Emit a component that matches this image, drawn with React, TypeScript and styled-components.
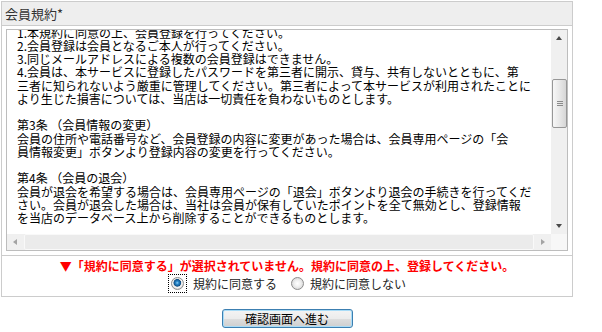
import React, { useLayoutEffect, useRef } from "react";
import styled, { createGlobalStyle } from "styled-components";

const GlobalStyle = createGlobalStyle`
  body {
    margin: 0;
    background: #fff;
    color: #000;
    font-family: "Noto Sans CJK JP", "Noto Sans", sans-serif;
  }
`;

const terms = [
  "会員規約",
  "",
  "当サイトのご利用にあたっては、以下の会員規約をよくお読みください。",
  "",
  "第1条 （会員）",
  "「会員」とは、本規約に同意の上、当店所定の手続きにより会員登録を行い、",
  "当店がこれを承認した方をいいます。",
  "",
  "第2条 （会員登録）",
  "会員登録にあたっては、以下の事項を遵守してください。",
  "1.本規約に同意の上、会員登録を行ってください。",
  "2.会員登録は会員となるご本人が行ってください。",
  "3.同じメールアドレスによる複数の会員登録はできません。",
  "4.会員は、本サービスに登録したパスワードを第三者に開示、貸与、共有しないとともに、第",
  "三者に知られないよう厳重に管理してください。第三者によって本サービスが利用されたことに",
  "より生じた損害については、当店は一切責任を負わないものとします。",
  "",
  "第3条 （会員情報の変更）",
  "会員の住所や電話番号など、会員登録の内容に変更があった場合は、会員専用ページの「会",
  "員情報変更」ボタンより登録内容の変更を行ってください。",
  "",
  "第4条 （会員の退会）",
  "会員が退会を希望する場合は、会員専用ページの「退会」ボタンより退会の手続きを行ってくだ",
  "さい。会員が退会した場合は、当社は会員が保有していたポイントを全て無効とし、登録情報",
  "を当店のデータベース上から削除することができるものとします。",
  "",
  "第5条 （会員資格の喪失）",
  "会員が以下のいずれかに該当する場合、当店は事前の通知なく会員資格を取り消すことが",
  "できるものとします。",
  "1.会員登録の申請内容に虚偽の記載があった場合",
  "2.本規約に違反した場合",
  "3.その他、当店が会員として不適切と判断した場合",
  "",
  "第6条 （ポイント）",
  "ポイントの付与および利用については、当店が別途定める条件に従うものとします。",
  "",
  "第7条 （個人情報の取り扱い）",
  "当店は、会員の個人情報を当店のプライバシーポリシーに従い適切に取り扱います。",
  "",
  "第8条 （禁止事項）",
  "会員は、本サービスの利用にあたり、以下の行為を行ってはならないものとします。",
  "1.他の会員または第三者の権利を侵害する行為",
  "2.当店の運営を妨害する行為",
  "3.法令または公序良俗に反する行為",
  "",
  "第9条 （規約の変更）",
  "当店は、会員の承諾を得ることなく本規約を変更できるものとします。",
  "",
  "第10条 （準拠法）",
  "本規約の解釈にあたっては、日本法を準拠法とします。",
  "",
  "附則",
  "本規約は、会員登録の時点より適用されます。",
].join("\n");

const App = () => {
  const termsRef = useRef<HTMLTextAreaElement | null>(null);

  useLayoutEffect(() => {
    if (termsRef.current) {
      termsRef.current.scrollTop = 137;
    }
  }, []);

  return (
    <Page>
      <GlobalStyle />
      <Table>
        <HeaderRow>会員規約*</HeaderRow>
        <TermsRow>
          <TermsBox>
            <TermsText ref={termsRef} readOnly wrap="off" value={terms} />
            <VScroll>
              <ArrowButton>
                <Arrow $dir="up" />
              </ArrowButton>
              <VTrack>
                <VThumb $top={33} $size={49}>
                  <Grip />
                </VThumb>
              </VTrack>
              <ArrowButton>
                <Arrow $dir="down" />
              </ArrowButton>
            </VScroll>
            <HScroll>
              <ArrowButton>
                <Arrow $dir="left" $muted />
              </ArrowButton>
              <HTrack>
                <HThumb />
              </HTrack>
              <ArrowButton>
                <Arrow $dir="right" $muted />
              </ArrowButton>
            </HScroll>
            <Corner />
          </TermsBox>
        </TermsRow>
        <AgreeRow>
          <Warning>
            ▼「規約に同意する」が選択されていません。規約に同意の上、登録してください。
          </Warning>
          <RadioRow>
            <RadioOption>
              <FocusRing>
                <Radio type="radio" name="agree" defaultChecked />
              </FocusRing>
              規約に同意する
            </RadioOption>
            <RadioOption>
              <Radio type="radio" name="agree" />
              規約に同意しない
            </RadioOption>
          </RadioRow>
        </AgreeRow>
      </Table>
      <Actions>
        <SubmitButton type="button">確認画面へ進む</SubmitButton>
      </Actions>
    </Page>
  );
};

export default App;

const Page = styled.div`
  padding: 1px 0 0 1px;
  width: 572px;
`;

const Table = styled.div`
  width: 572px;
  box-sizing: border-box;
  border: 1px solid #cccccc;
`;

const HeaderRow = styled.div`
  height: 23px;
  line-height: 23px;
  padding-left: 3px;
  background: #eeeeee;
  border-bottom: 1px solid #cccccc;
  font-size: 13px;
  color: #333333;
`;

const TermsRow = styled.div`
  padding: 3px 4px 4px;
  border-bottom: 1px solid #cccccc;
`;

const TermsBox = styled.div`
  display: grid;
  grid-template-columns: 1fr 16px;
  grid-template-rows: 1fr 16px;
  width: 562px;
  height: 222px;
  box-sizing: border-box;
  border: 1px solid #bdbdbd;
  background: #fff;
`;

const TermsText = styled.textarea`
  display: block;
  width: 100%;
  height: 100%;
  min-height: 0;
  box-sizing: border-box;
  margin: 0;
  padding: 0 0 0 10px;
  border: none;
  outline: none;
  resize: none;
  overflow: hidden;
  white-space: pre;
  background: #fff;
  color: #000;
  font-family: "Noto Sans CJK JP", sans-serif;
  font-size: 12px;
  line-height: 13.25px;
`;

const VScroll = styled.div`
  display: flex;
  flex-direction: column;
  background: #f0f0f0;
`;

const HScroll = styled.div`
  display: flex;
  background: #f0f0f0;
`;

const Corner = styled.div`
  background: #f7f7f7;
`;

const ArrowButton = styled.div`
  flex: 0 0 16px;
  height: 16px;
  display: flex;
  align-items: center;
  justify-content: center;
`;

const Arrow = styled.span<{ $dir: "up" | "down" | "left" | "right"; $muted?: boolean }>`
  width: 0;
  height: 0;
  border-style: solid;
  border-color: transparent;
  ${({ $dir, $muted }) => {
    const c = $muted ? "#a3a3a3" : "#4a4a4a";
    if ($dir === "up") return `border-width: 0 3.5px 4px; border-bottom-color: ${c};`;
    if ($dir === "down") return `border-width: 4px 3.5px 0; border-top-color: ${c};`;
    if ($dir === "left") return `border-width: 3.5px 4px 3.5px 0; border-right-color: ${c};`;
    return `border-width: 3.5px 0 3.5px 4px; border-left-color: ${c};`;
  }}
`;

const VTrack = styled.div`
  flex: 1;
  min-height: 0;
`;

const VThumb = styled.div<{ $top: number; $size: number }>`
  margin: ${(p) => p.$top}px 0 0 1px;
  height: ${(p) => p.$size}px;
  box-sizing: border-box;
  border: 1px solid #979797;
  border-radius: 2px;
  background: linear-gradient(to right, #f7f7f7, #e8e8e8 50%, #d6d6d6);
  display: flex;
  align-items: center;
  justify-content: center;
`;

const Grip = styled.span`
  width: 6px;
  height: 5px;
  background: repeating-linear-gradient(
    to bottom,
    #8a8a8a 0,
    #8a8a8a 1px,
    transparent 1px,
    transparent 2px
  );
`;

const HTrack = styled.div`
  flex: 1;
  display: flex;
  padding: 0 1px;
`;

const HThumb = styled.div`
  flex: 1;
  box-sizing: border-box;
  border: 1px solid #f9f9f9;
  border-radius: 2px;
  background: #ebebeb;
`;

const AgreeRow = styled.div`
  padding: 2px 0 3px;
`;

const Warning = styled.div`
  height: 16px;
  line-height: 16px;
  text-align: center;
  color: #ff0000;
  font-size: 12px;
  font-weight: bold;
`;

const RadioRow = styled.div`
  height: 19px;
  display: flex;
  align-items: center;
  justify-content: center;
  gap: 14px;
  font-size: 12px;
  color: #222;
`;

const RadioOption = styled.label`
  display: flex;
  align-items: center;
  gap: 6px;
  line-height: 19px;
`;

const FocusRing = styled.span`
  display: flex;
  border: 1px dotted #000;
  padding: 2px;
`;

const Radio = styled.input`
  appearance: none;
  width: 13px;
  height: 13px;
  margin: 0;
  box-sizing: border-box;
  border-radius: 50%;
  border: 1px solid #8c8c8c;
  background: radial-gradient(circle at 50% 50%, #ffffff 0, #f1f1f1 3px, #d9d9d9 6px);

  &:checked {
    background: radial-gradient(
      circle at 48% 44%,
      #8fd0f7 0,
      #2a88cb 1.5px,
      #0e4f86 3.5px,
      #d8d8d8 4px,
      #f7f7f7 4.8px,
      #d4d4d4 6px
    );
  }
`;

const Actions = styled.div`
  display: flex;
  justify-content: center;
  margin-top: 12px;
`;

const SubmitButton = styled.button`
  width: 131px;
  height: 19px;
  padding: 0;
  box-sizing: border-box;
  border: 1px solid #3c7fb1;
  border-radius: 3px;
  box-shadow: inset 0 0 0 1px #a9dcf7;
  background: linear-gradient(#f4f4f4 0%, #ececec 50%, #dedede 51%, #cfcfcf 100%);
  color: #000;
  font-family: "Noto Sans CJK JP", sans-serif;
  font-size: 12px;
  line-height: 17px;
`;
